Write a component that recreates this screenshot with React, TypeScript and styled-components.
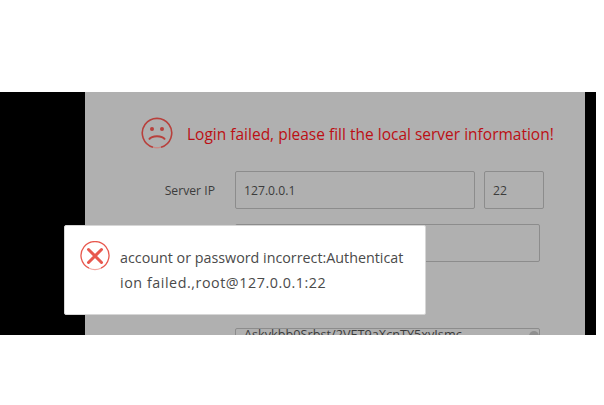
import React from "react";
import styled, { createGlobalStyle } from "styled-components";

const Global = createGlobalStyle`
  html, body { margin: 0; padding: 0; background: #fff; }
  body { font-family: "Open Sans", "Noto Sans", sans-serif; }
`;

const Page = styled.div`
  width: 604px;
  height: 405px;
  padding-top: 92px;
  box-sizing: border-box;
  overflow: hidden;
`;

const Stage = styled.div`
  position: relative;
  width: 596px;
  height: 243px;
  background: #000;
  overflow: hidden;
  padding-left: 85px;
  box-sizing: border-box;
`;

const Panel = styled.div`
  width: 500px;
  height: 300px;
  background: #b0b0b0;
  padding: 25px 0 0 56px;
  box-sizing: border-box;
`;

const Heading = styled.div`
  display: flex;
  align-items: center;
  gap: 14px;
  height: 32px;
  color: #bc0f14;
  font-size: 15.5px;
  white-space: nowrap;
`;

const HeadingText = styled.span`
  margin-top: 2px;
`;

const Row = styled.div<{ $top: number }>`
  display: flex;
  align-items: center;
  margin-top: ${(p) => p.$top}px;
`;

const Label = styled.div`
  width: 74px;
  margin-right: 20px;
  text-align: right;
  font-size: 12.2px;
  color: #3c3c3c;
`;

const Field = styled.div<{ $w: number; $h?: number }>`
  width: ${(p) => p.$w}px;
  height: ${(p) => p.$h ?? 38}px;
  box-sizing: border-box;
  border: 1px solid #8c8c8c;
  border-radius: 2px;
  padding: 0 8px;
  display: flex;
  align-items: center;
  font-size: 12.2px;
  color: #3c3c3c;
`;

const PortField = styled(Field)`
  margin-left: 9px;
`;

const AreaField = styled(Field)`
  position: relative;
  align-items: flex-start;
  padding: 0 8px;
  font-size: 12.7px;
  line-height: 10px;
  white-space: nowrap;
`;

const Thumb = styled.div`
  position: absolute;
  right: 0;
  top: 2px;
  width: 10px;
  height: 30px;
  border-radius: 5px;
  background: #8f8f8f;
`;

const Toast = styled.div`
  position: absolute;
  left: 64px;
  top: 133px;
  width: 362px;
  height: 90px;
  box-sizing: border-box;
  background: #fff;
  border: 1px solid #d6d6d6;
  border-radius: 2px;
  padding: 15px 15px;
  display: flex;
  gap: 10px;
`;

const ToastText = styled.div`
  width: 286px;
  margin-top: 4px;
  font-size: 14.3px;
  line-height: 25px;
  color: #4a4a4a;
  word-break: break-all;
`;

const ToastTail = styled.span`
  letter-spacing: 0.55px;
`;

const IconBox = styled.svg`
  flex: none;
  display: block;
`;

const SadFace = () => (
  <IconBox width="32" height="32" viewBox="0 0 32 32" fill="none">
    <path d="M12 30.2A14.7 14.7 0 1 1 20 30.2" stroke="#b8403c" strokeWidth="1.6" />
    <path d="M12 30.2A14.7 14.7 0 0 0 20 30.2" stroke="#c98a86" strokeWidth="1.4" />
    <circle cx="11" cy="12" r="2" fill="#b8403c" />
    <circle cx="21" cy="12" r="2" fill="#b8403c" />
    <path d="M8 22.5C11 18.3 21 18.3 24 22.5" stroke="#b8403c" strokeWidth="2" />
  </IconBox>
);

const ErrorIcon = () => (
  <IconBox width="30" height="30" viewBox="0 0 30 30" fill="none">
    <path d="M9 27.2A14 14 0 1 1 21 27.2" stroke="#e8584e" strokeWidth="1.3" />
    <path d="M9 27.2A14 14 0 0 0 21 27.2" stroke="#f2a8a2" strokeWidth="1.2" />
    <path d="M8.5 8.5L21.5 21.5M21.5 8.5L8.5 21.5" stroke="#e8584e" strokeWidth="3" strokeLinecap="round" />
  </IconBox>
);

export default function App() {
  return (
    <Page>
      <Global />
      <Stage>
        <Panel>
          <Heading>
            <SadFace />
            <HeadingText>Login failed, please fill the local server information!</HeadingText>
          </Heading>
          <Row $top={22}>
            <Label>Server IP</Label>
            <Field $w={240}>127.0.0.1</Field>
            <PortField $w={60}>22</PortField>
          </Row>
          <Row $top={15}>
            <Label />
            <Field $w={305} />
          </Row>
          <Row $top={66}>
            <Label />
            <AreaField $w={305} $h={60}>
              Askykbb0Srbst/2VET9aXcnTY5xvIsmc
              <Thumb />
            </AreaField>
          </Row>
        </Panel>
        <Toast>
          <ErrorIcon />
          <ToastText>
            account or password incorrect:Authenticat
            <ToastTail>ion failed.,root@127.0.0.1:22</ToastTail>
          </ToastText>
        </Toast>
      </Stage>
    </Page>
  );
}
